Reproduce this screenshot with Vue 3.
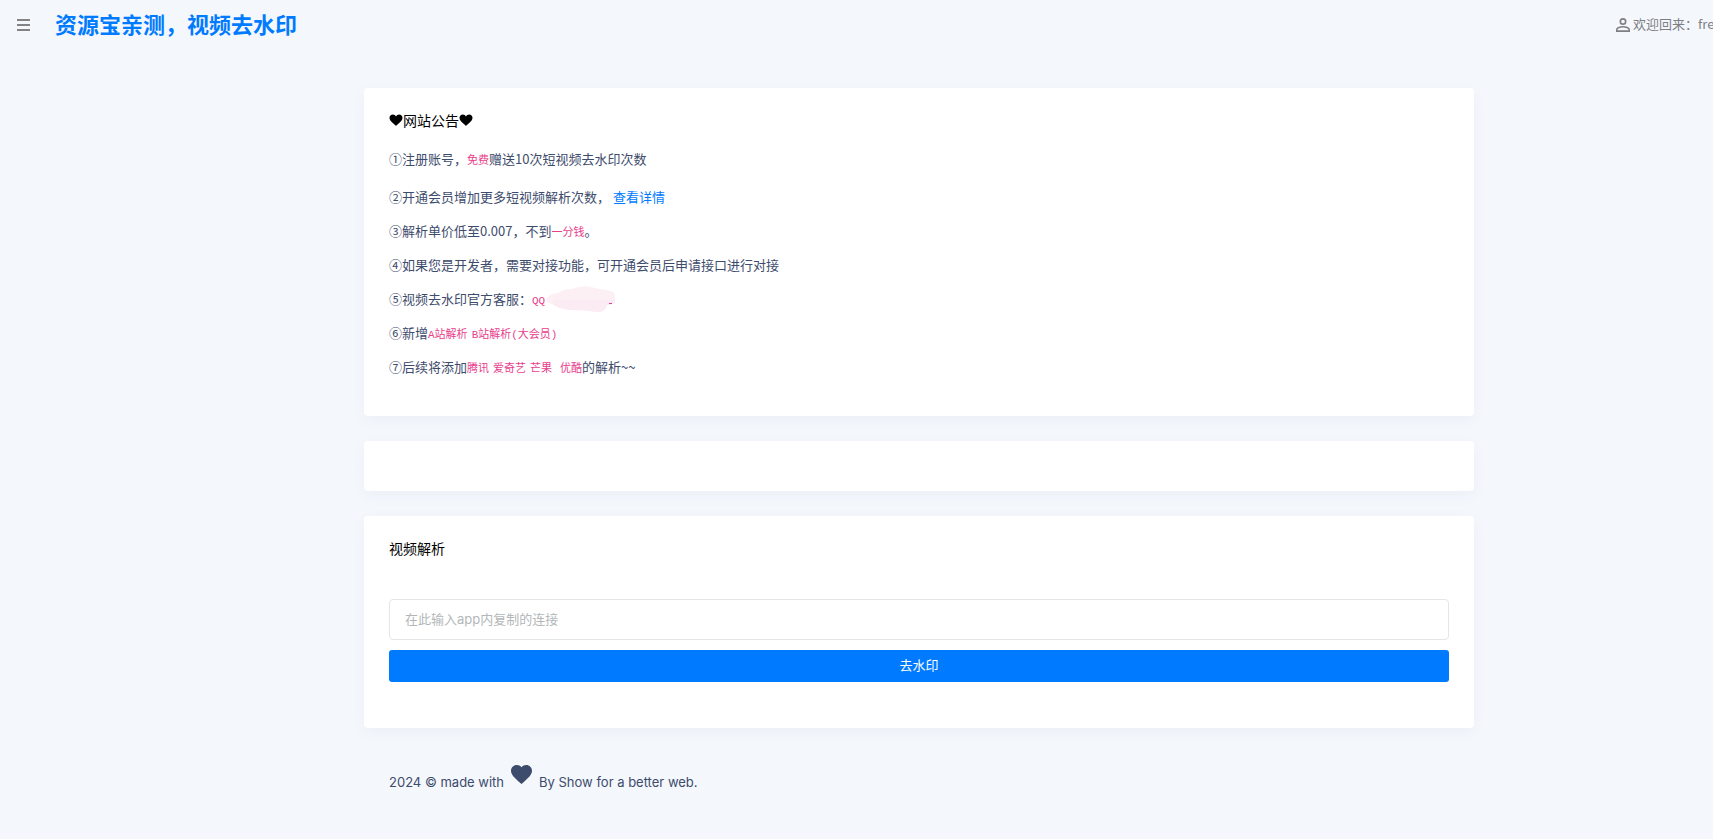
<script setup>
import { ref } from 'vue'

const link = ref('')
</script>

<template>
  <div class="page">
    <header class="topbar">
      <button class="menu" type="button" aria-label="菜单">
        <svg width="13" height="12" viewBox="0 0 13 12"><path d="M0 0h13v2H0zM0 5h13v2H0zM0 10h13v2H0z" fill="currentColor" /></svg>
      </button>
      <h1 class="brand">资源宝亲测，视频去水印</h1>
      <div class="user">
        <svg width="14" height="14" viewBox="0 0 16 16"><path d="M8 0a4 4 0 1 1 0 8 4 4 0 0 1 0-8m0 1.900a2.100 2.100 0 1 0 0 4.200 2.100 2.100 0 0 0 0-4.200M8 9c2.670 0 8 1.330 8 4v3H0v-3c0-2.670 5.330-4 8-4m0 1.900c-2.970 0-6.100 1.460-6.100 2.100v1.100h12.200V13c0-.640-3.130-2.100-6.100-2.100" fill="currentColor" /></svg>
        <span>欢迎回来：fre</span>
      </div>
    </header>

    <main class="main">
      <div class="container">
        <section class="card notice">
          <h2 class="title">
            <svg width="14" height="12" viewBox="0 0 14 12"><path d="M7 12C5 9.600.5 7.500.5 3.800C.5 1.800 2 .5 3.800.5C5.200.5 6.500 1.300 7 2.600C7.500 1.300 8.800.5 10.200.5C12 .5 13.500 1.800 13.500 3.800C13.500 7.500 9 9.600 7 12Z" fill="currentColor" /></svg>网站公告<svg width="14" height="12" viewBox="0 0 14 12"><path d="M7 12C5 9.600.5 7.500.5 3.800C.5 1.800 2 .5 3.800.5C5.200.5 6.500 1.300 7 2.600C7.500 1.300 8.800.5 10.200.5C12 .5 13.500 1.800 13.500 3.800C13.500 7.500 9 9.600 7 12Z" fill="currentColor" /></svg>
          </h2>
          <p class="first">①注册账号，<code>免费</code>赠送10次短视频去水印次数</p>
          <p>②开通会员增加更多短视频解析次数， <a href="#">查看详情</a></p>
          <p>③解析单价低至0.007，不到<code>一分钱</code>。</p>
          <p>④如果您是开发者，需要对接功能，可开通会员后申请接口进行对接</p>
          <p>⑤视频去水印官方客服：<code>QQ</code><span class="masked"><svg width="72" height="28" viewBox="0 0 72 28"><path d="M1 15Q3 9 13 8Q18 4 27 4Q36 0 46 2Q54 4 61 5Q69 6 70 10V17Q67 20 62 20Q61 26 54 27Q42 26 37 25Q24 26 15 23Q9 21 8 19Q2 19 1 15Z" fill="#fdf0f5" /><path d="M8 15H70V17Q67 20 62 20Q61 26 54 27Q42 26 37 25Q24 26 15 23Q9 21 8 19Z" fill="#fbebf3" /><path d="M64 18h3v1h-3z" fill="#e83e8c" /></svg></span></p>
          <p>⑥新增<code>A站解析</code><code class="next">B站解析(大会员)</code></p>
          <p>⑦后续将添加<code>腾讯</code><code class="next">爱奇艺</code><code class="next">芒果</code><code class="next wide">优酷</code>的解析~~</p>
        </section>

        <section class="card"></section>

        <section class="card parser">
          <h2 class="title">视频解析</h2>
          <form @submit.prevent>
            <input v-model="link" type="text" aria-label="视频连接" placeholder="在此输入app内复制的连接" />
            <button class="submit" type="submit">去水印</button>
          </form>
        </section>

        <footer class="footer">
          <span>2024 © made with</span>
          <svg width="21" height="19" viewBox="2 3 20 18.350" preserveAspectRatio="none"><path d="M12 21.350l-1.450-1.320C5.400 15.360 2 12.280 2 8.500 2 5.420 4.420 3 7.500 3c1.740 0 3.410.810 4.500 2.090C13.090 3.810 14.760 3 16.500 3 19.580 3 22 5.420 22 8.500c0 3.780-3.400 6.860-8.550 11.540L12 21.350z" fill="currentColor" /></svg>
          <span>By Show for a better web.</span>
        </footer>
      </div>
    </main>
  </div>
</template>

<style>
body {
  background: #f4f7fc;
}
</style>

<style scoped>
.page {
  min-height: 100vh;
  overflow: hidden;
  background: #f4f7fc;
  color: #3d4b6c;
  font: 13px/20px "Noto Sans CJK SC", sans-serif;
}
.page * {
  box-sizing: border-box;
}
.topbar {
  display: flex;
  align-items: center;
  height: 50px;
  padding-left: 17px;
  color: #7e7f84;
}
.menu {
  display: flex;
  padding: 0;
  border: 0;
  background: none;
  color: #838386;
  cursor: pointer;
}
.brand {
  margin: 0 0 4px 25px;
  color: #007bff;
  font-size: 22px;
  line-height: 32px;
  font-weight: 700;
  white-space: nowrap;
}
.user {
  display: flex;
  flex: none;
  align-items: center;
  gap: 3px;
  width: 97px;
  margin-left: auto;
  white-space: nowrap;
}
.user svg {
  flex: none;
}
.user span {
  margin-bottom: 2px;
}
.main {
  padding: 38px 0 0 125px;
}
.container {
  max-width: 1110px;
  margin: 0 auto;
}
.card {
  margin-bottom: 25px;
  padding: 25px;
  border-radius: 4px;
  background: #fff;
  box-shadow: 0 4px 16px rgba(30, 50, 90, 0.04);
}
.notice,
.parser {
  padding-top: 24px;
}
.title {
  display: flex;
  align-items: center;
  margin: 0;
  color: #000;
  font-size: 14px;
  line-height: 16px;
  font-weight: 400;
}
.notice .title {
  margin-bottom: 21px;
}
.notice p {
  height: 20px;
  margin: 0 0 14px;
  white-space: nowrap;
}
.notice .first {
  margin-bottom: 18px;
}
a {
  color: #007bff;
  text-decoration: none;
}
code {
  color: #e83e8c;
  font: 11px/16px "Liberation Mono", "Noto Sans CJK SC", monospace;
}
.next {
  margin-left: 4px;
}
.wide {
  margin-left: 8px;
}
.masked {
  position: relative;
}
.masked svg {
  position: absolute;
  top: -4px;
  left: 0;
}
.parser .title {
  margin-bottom: 43px;
}
form {
  display: flex;
  flex-direction: column;
  gap: 10px;
  margin-bottom: 21px;
}
input {
  width: 100%;
  height: 41px;
  padding: 0 15px 2px;
  border: 1px solid #e3e5e8;
  border-radius: 4px;
  background: #fff;
  color: #3d4b6c;
  font: 13px/20px Inter, "Noto Sans CJK SC", sans-serif;
}
input::placeholder {
  color: #b3b7ba;
  opacity: 1;
}
.submit {
  height: 32px;
  padding: 0 0 2px;
  border: 0;
  border-radius: 3px;
  background: #007bff;
  color: #fff;
  font: 13px/20px "Noto Sans CJK SC", sans-serif;
  cursor: pointer;
}
.footer {
  display: flex;
  align-items: flex-start;
  gap: 7px;
  padding: 12px 25px 25px;
  font: 13px/20px Inter, sans-serif;
}
.footer span {
  margin-top: 7px;
}
</style>
